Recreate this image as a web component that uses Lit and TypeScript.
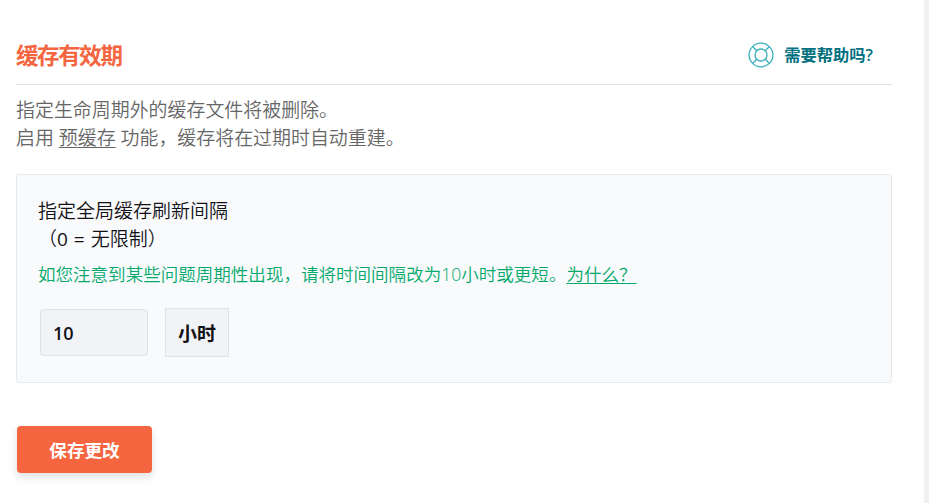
import { LitElement, css, html } from 'lit'
import { customElement, property } from 'lit/decorators.js'

@customElement('help-link')
export class HelpLink extends LitElement {
  protected render() {
    return html`
      <a class="link">
        <svg class="icon" viewBox="0 0 26 26" fill="none" stroke="currentColor">
          <circle cx="13" cy="13" r="11.9" />
          <circle cx="13" cy="13" r="6" />
          <path d="M4.8 4.8L9 9M21.2 4.8L17 9M4.8 21.2L9 17M21.2 21.2L17 17" />
        </svg>
        <span class="text"><slot></slot></span>
      </a>
    `
  }

  static styles = css`
    .link {
      display: flex;
      gap: 10px;
      align-items: center;
    }

    .icon {
      width: 26px;
      height: 26px;
      color: #39b0bf;
      stroke-width: 1.3;
    }

    .text {
      font-size: 16.3px;
      font-weight: 600;
      line-height: 26px;
      color: #02707f;
    }
  `
}

@customElement('duration-field')
export class DurationField extends LitElement {
  @property() value = ''
  @property() unit = ''

  protected render() {
    return html`
      <div class="row">
        <input class="input" type="text" .value=${this.value} />
        <span class="unit">${this.unit}</span>
      </div>
    `
  }

  static styles = css`
    .row {
      display: flex;
      gap: 17px;
      align-items: center;
    }

    .input,
    .unit {
      box-sizing: border-box;
      border: 1px solid #e0e1e9;
      background: #f2f3f6;
      color: #121116;
      font-family: inherit;
    }

    .input {
      width: 108px;
      height: 47px;
      margin: 0;
      padding: 0 12px;
      border-radius: 4px;
      font-size: 18px;
      font-weight: 650;
    }

    .unit {
      width: 64px;
      height: 49px;
      padding-top: 2px;
      font-size: 19px;
      font-weight: 700;
      line-height: 46px;
      text-align: center;
    }
  `
}

@customElement('app-root')
export class AppRoot extends LitElement {
  protected render() {
    return html`
      <main class="page">
        <header class="header">
          <h3 class="title">缓存有效期</h3>
          <help-link>需要帮助吗?</help-link>
        </header>
        <div class="description">
          指定生命周期外的缓存文件将被删除。<br />
          启用 <a class="underline">预缓存</a> 功能，缓存将在过期时自动重建。
        </div>
        <section class="panel">
          <div class="label">
            指定全局缓存刷新间隔<br />（<span class="limit">0 = </span>无限制）
          </div>
          <div class="hint">
            如您注意到某些问题周期性出现，请将时间间隔改为10小时或更短。<a class="underline">为什么？</a>
          </div>
          <duration-field value="10" unit="小时"></duration-field>
        </section>
        <button class="save">保存更改</button>
      </main>
    `
  }

  static styles = css`
    :host {
      display: block;
      font-family: 'Open Sans', 'Noto Sans CJK SC', sans-serif;
    }

    .page {
      box-sizing: border-box;
      height: 503px;
      padding: 25px 32px 0 16px;
      border-right: 5px solid #f0f0f1;
      background: #fff;
      overflow: hidden;
    }

    .header {
      display: flex;
      justify-content: space-between;
      align-items: center;
      box-sizing: border-box;
      height: 60px;
      padding-right: 19px;
      border-bottom: 1px solid #e0e1e9;
    }

    .title {
      margin: 2px 0 0;
      font-size: 22.5px;
      font-weight: 700;
      line-height: 30px;
      letter-spacing: -1.4px;
      color: #f56640;
    }

    .description {
      margin-top: 11px;
      font-size: 18.95px;
      font-weight: 350;
      line-height: 28px;
      color: #666;
    }

    .underline {
      text-decoration: underline;
      text-decoration-thickness: 1px;
      text-underline-offset: 2px;
    }

    .panel {
      box-sizing: border-box;
      height: 209px;
      margin-top: 22px;
      padding: 22px 21px 0;
      border: 1px solid #e6e9ee;
      border-radius: 3px;
      background: #f9fafc;
    }

    .label {
      font-size: 19px;
      font-weight: 350;
      line-height: 28px;
      color: #121116;
    }

    .limit {
      font-weight: 500;
      word-spacing: 1px;
    }

    .hint {
      margin-top: 8px;
      font-size: 17.54px;
      font-weight: 350;
      line-height: 26px;
      color: #02a96b;
      white-space: nowrap;
    }

    duration-field {
      display: block;
      margin: 21px 0 0 2px;
    }

    .save {
      display: block;
      width: 135px;
      height: 47px;
      margin: 43px 0 0 1px;
      padding: 0;
      border: 0;
      border-radius: 4px;
      background: #f56640;
      box-shadow: 0 4px 8px rgba(18, 17, 22, 0.13);
      color: #fff;
      font-family: inherit;
      font-size: 17.6px;
      font-weight: 700;
    }
  `
}
